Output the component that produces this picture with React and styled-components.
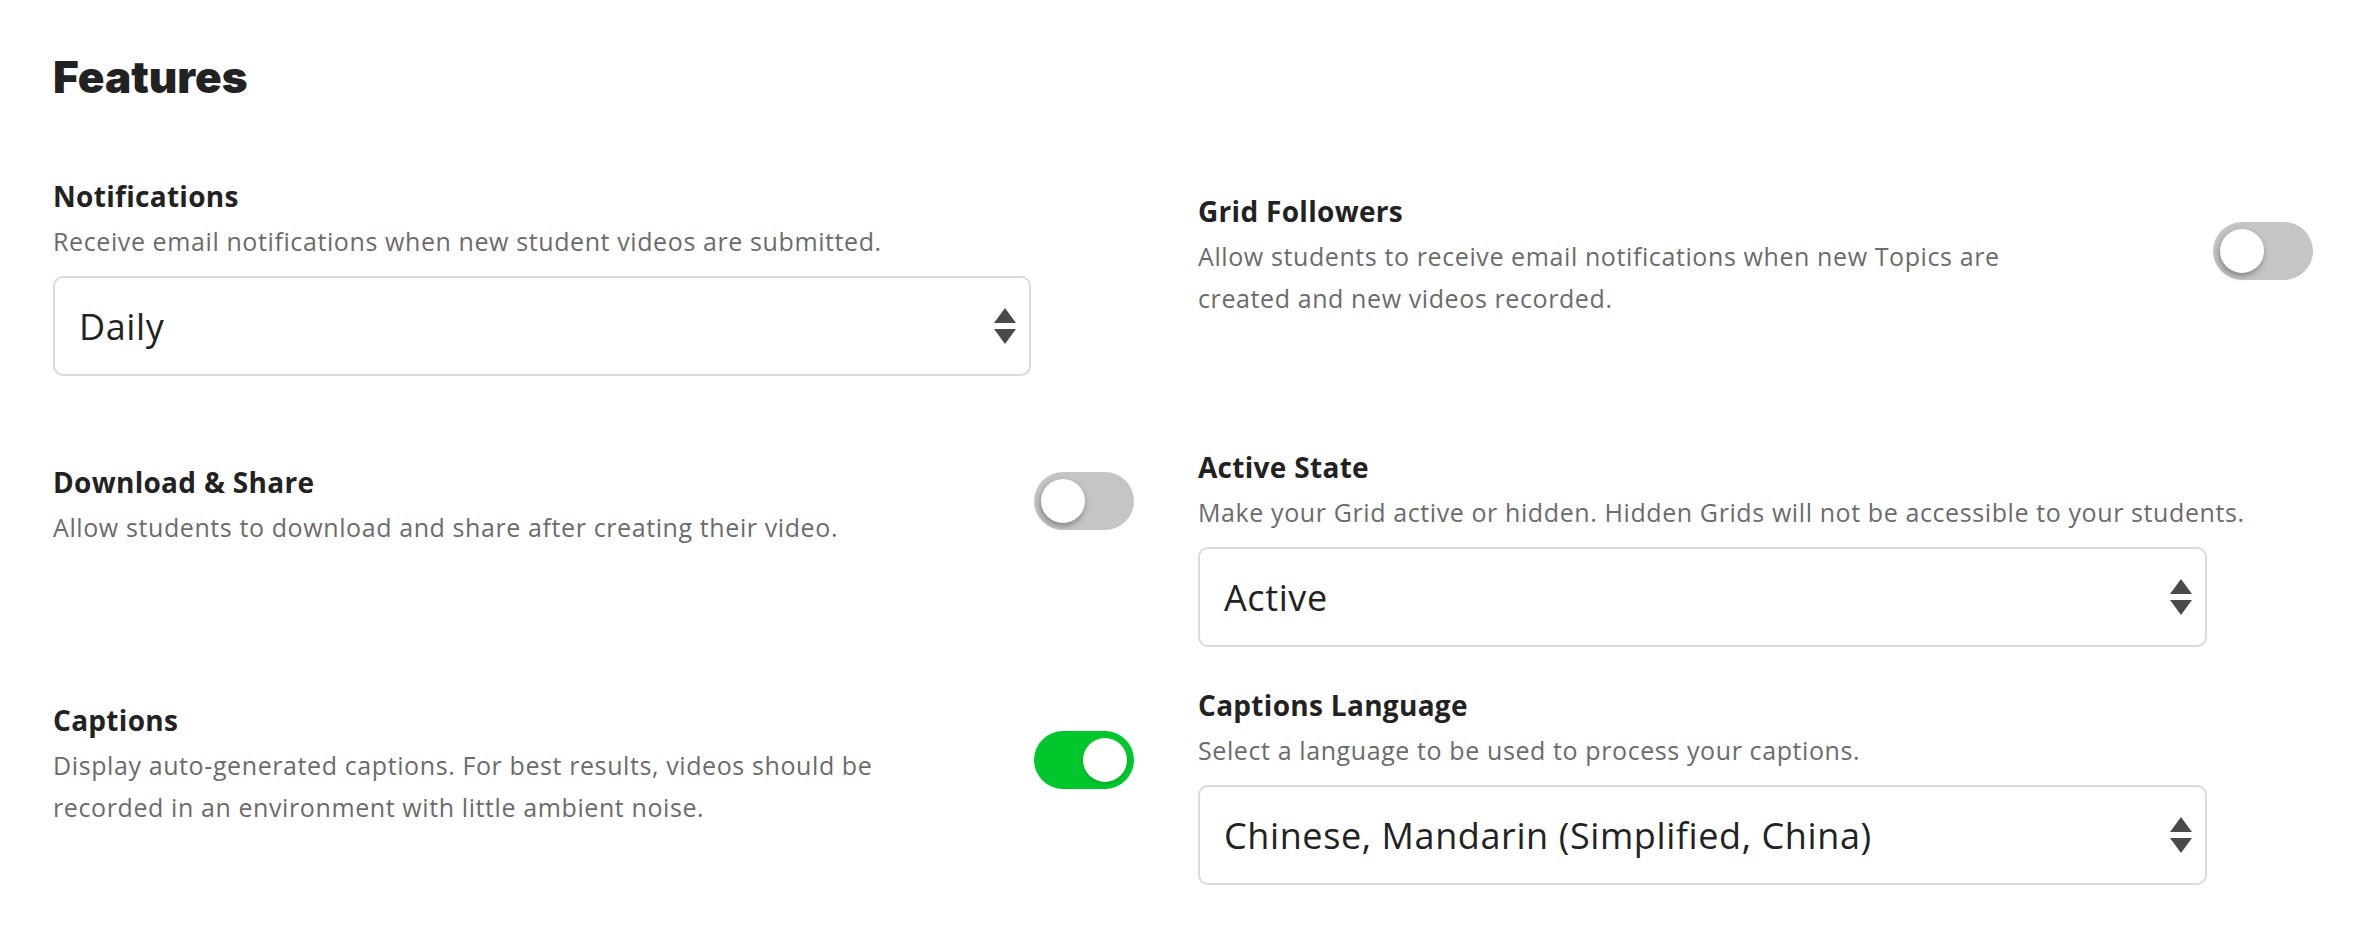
import React from "react";
import styled, { createGlobalStyle } from "styled-components";

const GlobalStyle = createGlobalStyle`
  html, body {
    margin: 0;
    padding: 0;
    background: #ffffff;
  }
  body {
    font-family: "Open Sans", Lato, Arial, sans-serif;
    color: #222222;
    -webkit-font-smoothing: antialiased;
  }
  * { box-sizing: border-box; }
`;

const Page = styled.main`
  padding: 52px 65px 40px 53px;
`;

const Title = styled.h1`
  margin: 0 0 78px;
  font-family: Inter, "Open Sans", Arial, sans-serif;
  font-size: 44px;
  line-height: 50px;
  font-weight: 900;
  color: #222222;
  letter-spacing: 0;
`;

const Grid = styled.section`
  display: grid;
  grid-template-columns: 1081px 1115px;
  column-gap: 64px;
  row-gap: 42px;
  align-items: start;
`;

const Setting = styled.div`
  padding-top: ${(p) => p.$pt || 0}px;
  margin-bottom: ${(p) => p.$mb || 0}px;
`;

const ToggleSetting = styled(Setting)`
  display: flex;
  align-items: center;
  justify-content: space-between;
`;

const TextBlock = styled.div`
  max-width: 840px;
`;

const Label = styled.h3`
  margin: 0 0 8px;
  font-size: 28px;
  line-height: 32px;
  font-weight: 700;
  color: #222222;
  letter-spacing: 0.3px;
`;

const Desc = styled.p`
  margin: 0;
  font-size: 25px;
  line-height: 42px;
  font-weight: 400;
  color: #6b6b6b;
  letter-spacing: 0.6px;
`;

const SelectBox = styled.div`
  margin-top: 14px;
  width: 90.5%;
  height: 100px;
  border: 2px solid #dadada;
  border-radius: 10px;
  background: #ffffff;
  display: flex;
  align-items: center;
  justify-content: space-between;
  padding: 0 13px 0 24px;
  cursor: pointer;
`;

const SelectValue = styled.span`
  font-size: 36px;
  font-weight: 400;
  color: #222222;
  letter-spacing: 0.6px;
`;

const Switch = styled.div`
  position: relative;
  flex: none;
  width: 100px;
  height: 58px;
  border-radius: 29px;
  margin-bottom: 12px;
  background: ${(p) => (p.$on ? "#00c72c" : "#c5c5c5")};
  cursor: pointer;
`;

const Knob = styled.span`
  position: absolute;
  top: 7px;
  left: ${(p) => (p.$on ? 49 : 7)}px;
  width: 44px;
  height: 44px;
  border-radius: 50%;
  background: #ffffff;
  box-shadow: ${(p) =>
    p.$on ? "0 2px 3px rgba(0,0,0,0.15)" : "-1px 3px 6px rgba(0,0,0,0.35)"};
`;

const Arrows = () => (
  <svg width="22" height="36" viewBox="0 0 22 36" aria-hidden="true">
    <polygon points="11,0 22,15 0,15" fill="#4a4a4a" />
    <polygon points="0,21 22,21 11,36" fill="#4a4a4a" />
  </svg>
);

const Select = ({ value }) => (
  <SelectBox role="combobox" aria-label={value}>
    <SelectValue>{value}</SelectValue>
    <Arrows />
  </SelectBox>
);

const Toggle = ({ on }) => (
  <Switch $on={on} role="switch" aria-checked={on}>
    <Knob $on={on} />
  </Switch>
);

export default function App() {
  return (
    <>
      <GlobalStyle />
      <Page>
        <Title>Features</Title>
        <Grid>
          <Setting $mb={33}>
            <Label>Notifications</Label>
            <Desc>Receive email notifications when new student videos are submitted.</Desc>
            <Select value="Daily" />
          </Setting>
          <ToggleSetting $pt={15}>
            <TextBlock>
              <Label>Grid Followers</Label>
              <Desc>
                Allow students to receive email notifications when new Topics are
                created and new videos recorded.
              </Desc>
            </TextBlock>
            <Toggle on={false} />
          </ToggleSetting>

          <ToggleSetting $pt={15}>
            <TextBlock>
              <Label>Download &amp; Share</Label>
              <Desc>Allow students to download and share after creating their video.</Desc>
            </TextBlock>
            <Toggle on={false} />
          </ToggleSetting>
          <Setting>
            <Label>Active State</Label>
            <Desc>
              Make your Grid active or hidden. Hidden Grids will not be accessible to your students.
            </Desc>
            <Select value="Active" />
          </Setting>

          <ToggleSetting $pt={15}>
            <TextBlock>
              <Label>Captions</Label>
              <Desc>
                Display auto-generated captions. For best results, videos should be
                recorded in an environment with little ambient noise.
              </Desc>
            </TextBlock>
            <Toggle on={true} />
          </ToggleSetting>
          <Setting>
            <Label>Captions Language</Label>
            <Desc>Select a language to be used to process your captions.</Desc>
            <Select value="Chinese, Mandarin (Simplified, China)" />
          </Setting>
        </Grid>
      </Page>
    </>
  );
}
